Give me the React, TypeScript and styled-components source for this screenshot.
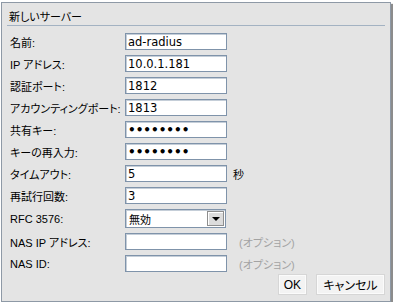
import { FunctionComponent } from "react"
import styled, { createGlobalStyle } from "styled-components"

const GlobalStyle = createGlobalStyle`
  html, body {
    margin: 0;
    padding: 0;
    background: #ffffff;
  }
`

const StyledDialog = styled.div`
  box-sizing: border-box;
  width: 390px;
  height: 300px;
  margin: 2px 0 0 1px;
  background-color: #e4e4e4;
  border: 1px solid #8e99a6;
  box-shadow: 2px 2px 1px rgba(0, 0, 0, 0.45);
  display: flex;
  flex-direction: column;
  padding: 0 5px;
  font-family: "Liberation Sans", "Noto Sans CJK JP", sans-serif;
  font-size: 11px;
  font-feature-settings: "palt";
  color: #000;
`

const StyledHeader = styled.div`
  box-sizing: border-box;
  height: 23px;
  padding: 3px 2px 0;
  display: flex;
  align-items: center;
  border-bottom: 1px solid #a3b2c2;
  font-size: 11px;
`

const StyledForm = styled.div`
  display: grid;
  grid-template-columns: 115px 102px auto;
  row-gap: 5px;
  align-items: center;
  padding: 7px 0 0 3px;
`

const StyledLabel = styled.label`
  white-space: nowrap;
  font-size: 11px;
`

const StyledInput = styled.input`
  box-sizing: border-box;
  width: 102px;
  height: 17px;
  margin: 0;
  padding: 0 2px;
  border: 1px solid #7f93aa;
  box-shadow: inset 1px 1px 0 #c5ced8;
  background: #ffffff;
  font-family: "DejaVu Sans", "Noto Sans CJK JP", sans-serif;
  font-size: 11.5px;
  color: #000;
  outline: none;
`

const StyledPasswordInput = styled(StyledInput)`
  font-size: 12px;
  font-weight: bold;
`

const StyledSelect = styled.div`
  box-sizing: border-box;
  width: 101px;
  height: 19px;
  display: flex;
  align-items: center;
  border: 1px solid #7f93aa;
  box-shadow: inset 1px 1px 0 #c5ced8;
  background: #ffffff;
  padding: 1px 1px 1px 3px;
  font-family: "Noto Sans CJK JP", sans-serif;
  font-size: 11px;
`

const StyledSelectValue = styled.span`
  flex: 1;
`

const StyledSelectArrow = styled.span`
  box-sizing: border-box;
  width: 17px;
  height: 15px;
  background: #dcdcdc;
  border: 1px solid #8e8e8e;
  box-shadow: inset 1px 1px 0 #ffffff;
  display: flex;
  align-items: center;
  justify-content: center;

  &::after {
    content: "";
    border-left: 4px solid transparent;
    border-right: 4px solid transparent;
    border-top: 4px solid #000;
    margin-top: 1px;
  }
`

const StyledSuffix = styled.span<{ $muted?: boolean }>`
  font-size: 11px;
  color: ${(p) => (p.$muted ? "#a3a3a3" : "#000")};
  margin-left: ${(p) => (p.$muted ? "12px" : "6px")};
`

const StyledFooter = styled.div`
  display: flex;
  justify-content: flex-end;
  gap: 11px;
  padding: 3px 1px 0 0;
`

const StyledButton = styled.button<{ $wide?: boolean }>`
  box-sizing: border-box;
  height: 19px;
  min-width: ${(p) => (p.$wide ? "67px" : "26px")};
  padding: 0 4px;
  margin: 0;
  background: #f3f3f3;
  border: 1px solid #fbfbfb;
  box-shadow: 0 0 0 1px #d6d6d6;
  font-family: "Liberation Sans", "Noto Sans CJK JP", sans-serif;
  font-feature-settings: "palt";
  font-size: 12px;
  color: #000;
`

interface InterfaceField {
  label: string
  value?: string
  password?: boolean
  suffix?: string
  muted?: boolean
}

const fields: InterfaceField[] = [
  { label: "名前:", value: "ad-radius" },
  { label: "IP アドレス:", value: "10.0.1.181" },
  { label: "認証ポート:", value: "1812" },
  { label: "アカウンティングポート:", value: "1813" },
  { label: "共有キー:", value: "secret12", password: true },
  { label: "キーの再入力:", value: "secret12", password: true },
  { label: "タイムアウト:", value: "5", suffix: "秒" },
  { label: "再試行回数:", value: "3" },
]

const optionalFields: InterfaceField[] = [
  { label: "NAS IP アドレス:", value: "", suffix: "(オプション)", muted: true },
  { label: "NAS ID:", value: "", suffix: "(オプション)", muted: true },
]

const FieldRow: FunctionComponent<InterfaceField> = ({ label, value, password, suffix, muted }) => {
  const Input = password ? StyledPasswordInput : StyledInput
  return (
    <>
      <StyledLabel>{label}</StyledLabel>
      <Input type={password ? "password" : "text"} defaultValue={value} />
      <StyledSuffix $muted={muted}>{suffix}</StyledSuffix>
    </>
  )
}

const App: FunctionComponent = () => {
  return (
    <>
      <GlobalStyle />
      <StyledDialog>
        <StyledHeader>新しいサーバー</StyledHeader>
        <StyledForm>
          {fields.map((f) => (
            <FieldRow key={f.label} {...f} />
          ))}
          <StyledLabel>RFC 3576:</StyledLabel>
          <StyledSelect>
            <StyledSelectValue>無効</StyledSelectValue>
            <StyledSelectArrow />
          </StyledSelect>
          <span />
          {optionalFields.map((f) => (
            <FieldRow key={f.label} {...f} />
          ))}
        </StyledForm>
        <StyledFooter>
          <StyledButton type="button">OK</StyledButton>
          <StyledButton type="button" $wide>
            キャンセル
          </StyledButton>
        </StyledFooter>
      </StyledDialog>
    </>
  )
}

export default App
